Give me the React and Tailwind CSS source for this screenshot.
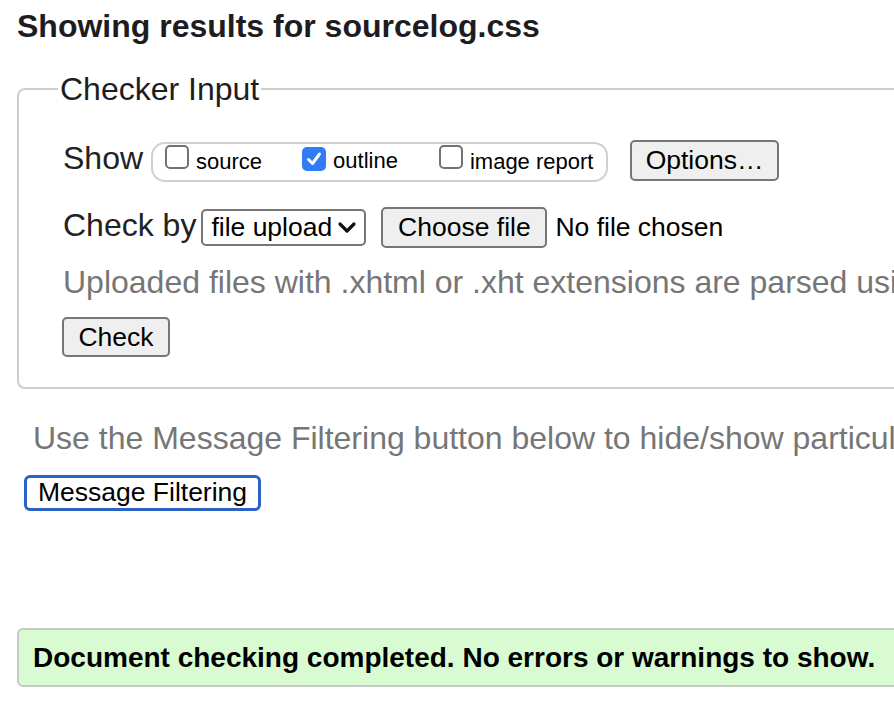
export default function App() {
  return (
    <div className="w-[894px] h-[702px] overflow-hidden bg-white text-[#222] font-['Liberation_Sans',Arial,sans-serif]">
      <div className="w-[1100px]">
        <h2 className="ml-[17px] mt-[8px] text-[32px] font-bold leading-[36.8px] text-[#1d1d1f]">
          Showing results for sourcelog.css
        </h2>

        <fieldset className="ml-[17px] mt-[26px] w-[1000px] border-2 border-[#cdcdcd] rounded-[8px] pl-[44px] pt-[32px] pb-[30px]">
          <legend className="-ml-[5px] px-[2px] text-[32px] leading-[36.8px] text-[#1d1d1f]">Checker Input</legend>

          <div className="flex items-baseline h-[42px]">
            <span className="text-[32px] leading-[36.8px]">Show</span>
            <div className="ml-[8px] flex items-center h-[40px] w-[457px] border-2 border-[#d0d0d0] rounded-[14px] pl-[12px] pb-[4px]">
              <Box label="source" />
              <Box label="outline" checked className="ml-[40px]" />
              <Box label="image report" className="ml-[41px]" />
            </div>
            <Btn className="ml-[22px] w-[149px] h-[41px]">Options…</Btn>
          </div>

          <div className="mt-[25px] flex items-baseline h-[41px]">
            <span className="text-[32px] leading-[36.8px]">Check by</span>
            <div className="ml-[5px] flex items-center justify-between w-[165px] h-[37px] border-2 border-[#767676] rounded-[5px] bg-white pl-[8px] pr-[7px]">
              <span className="text-[26.5px] leading-[30px] text-black">file upload</span>
              <svg width="20" height="14" viewBox="0 0 20 14" className="mt-[2px]">
                <path d="M3 3 L10 10 L17 3" fill="none" stroke="#111" strokeWidth="3.2" strokeLinecap="round" strokeLinejoin="round" />
              </svg>
            </div>
            <Btn className="ml-[15px] w-[166px] h-[41px]">Choose file</Btn>
            <span className="ml-[8px] text-[26.5px] text-black">No file chosen</span>
          </div>

          <p className="mt-[16px] text-[32px] leading-[36.8px] text-[#767676] whitespace-nowrap">
            Uploaded files with .xhtml or .xht extensions are parsed using the XML parser.
          </p>

          <Btn className="mt-[17px] -ml-[1px] w-[108px] h-[40px]">Check</Btn>
        </fieldset>

        <p className="ml-[33px] mt-[31px] text-[32px] leading-[36.8px] text-[#767676] whitespace-nowrap">
          Use the Message Filtering button below to hide/show particular messages, and to see total counts of errors and warnings.
        </p>
        <button className="ml-[24px] mt-[18px] w-[237px] h-[36px] flex items-center justify-center bg-white border-[3px] border-[#2b62c4] rounded-[6px] text-[26.5px] text-black">
          Message Filtering
        </button>

        <div className="ml-[17px] mt-[117px] w-[1000px] h-[59px] flex items-center pl-[14px] bg-[#d8fbd2] border-2 border-[#c8c8c8] rounded-[6px]">
          <span className="text-[28px] font-bold text-black">Document checking completed. No errors or warnings to show.</span>
        </div>
      </div>
    </div>
  )
}

function Btn({ className = '', children }) {
  return (
    <button className={`flex items-center justify-center bg-[#efefef] border-2 border-[#767676] rounded-[5px] text-[26.5px] leading-[30px] text-black ${className}`}>
      {children}
    </button>
  )
}

function Box({ label, checked, className = '' }) {
  return (
    <label className={`flex items-baseline ${className}`}>
      {checked ? (
        <span className="w-[24px] h-[24px] rounded-[5px] bg-[#2f7cf6] flex items-center justify-center">
          <svg width="18" height="18" viewBox="0 0 18 18">
            <path d="M3.5 9.5 L7.5 13.5 L14.5 4" fill="none" stroke="white" strokeWidth="3" strokeLinecap="round" strokeLinejoin="round" />
          </svg>
        </span>
      ) : (
        <span className="w-[24px] h-[24px] rounded-[5px] border-2 border-[#737373] bg-white" />
      )}
      <span className="ml-[7px] text-[22px] leading-[25px] text-black">{label}</span>
    </label>
  )
}
